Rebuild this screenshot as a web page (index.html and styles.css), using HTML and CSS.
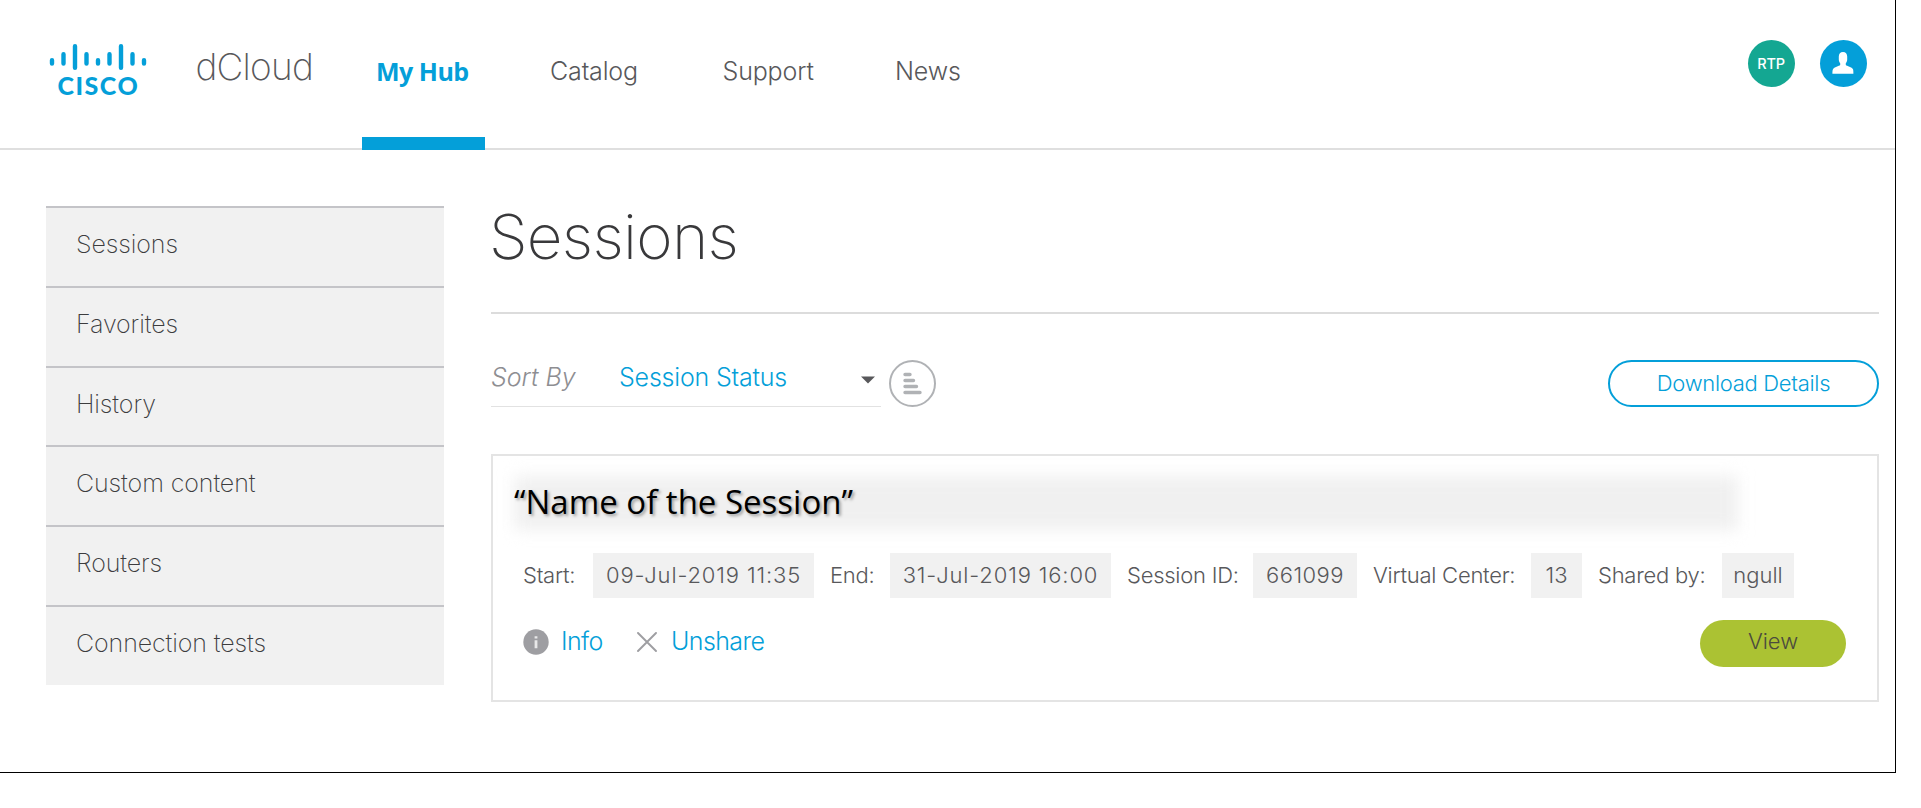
FILE: index.html
```html
<!DOCTYPE html>
<html lang="en">
<head>
<meta charset="utf-8">
<title>dCloud - Sessions</title>
<link rel="stylesheet" href="styles.css">
</head>
<body>
<div class="frame">
  <header class="header">
    <a class="logo">
      <svg class="logo-bars" viewBox="0 0 98 28" width="98" height="28">
        <g stroke="#049fd9" stroke-width="4.4" stroke-linecap="round">
          <path d="M3 17.2v3.4M14.500 11.2v9.4M26 3.2v21.600M37.500 11.2v9.4M49 17.2v3.4M60.500 11.2v9.4M72 3.2v21.600M83.500 11.2v9.4M95 17.2v3.4"/>
        </g>
      </svg>
      <span class="logo-word">CISCO</span>
    </a>
    <span class="brand">dCloud</span>
    <nav class="nav">
      <a class="nav-item active">My Hub</a>
      <a class="nav-item catalog">Catalog</a>
      <a class="nav-item support">Support</a>
      <a class="nav-item news">News</a>
    </nav>
    <div class="account">
      <span class="badge region">RTP</span>
      <span class="badge user">
        <svg viewBox="0 0 22 22" width="22" height="22"><path fill="#fff" d="M11 0c2.700 0 4.200 1.800 4.200 4.500v3c0 1.500-.6 2.900-1.400 3.800v1.600c1 1 6.200 2 7.200 4.300.3.900.4 2.400.4 4.500H.4c0-2.100.1-3.600.6-4.500 1-2.200 6.200-3.300 7.200-4.300v-1.600c-.8-.9-1.400-2.300-1.400-3.800v-3C6.800 1.800 8.300 0 11 0z"/></svg>
      </span>
    </div>
  </header>
  <div class="body">
    <aside class="sidebar">
      <a class="side-item">Sessions</a>
      <a class="side-item">Favorites</a>
      <a class="side-item">History</a>
      <a class="side-item">Custom content</a>
      <a class="side-item">Routers</a>
      <a class="side-item">Connection tests</a>
    </aside>
    <main class="main">
      <h1 class="title">Sessions</h1>
      <div class="toolbar">
        <div class="sort">
          <span class="sort-label">Sort By</span>
          <span class="sort-value">Session Status</span>
          <svg class="caret" viewBox="0 0 14 8" width="14" height="8"><path d="M0 .4h14L7 7.600z" fill="#58585b"/></svg>
        </div>
        <button class="order">
          <svg viewBox="0 0 19 23" width="19" height="23"><path d="M2 2.500h5M2 8.500h8.500M2 14.500h11.500M2 20.500h15" stroke="#b0b2b5" stroke-width="3.400" stroke-linecap="round"/></svg>
        </button>
        <button class="download">Download Details</button>
      </div>
      <section class="card">
        <div class="name"><span>“Name of the Session”</span></div>
        <div class="meta">
          <span class="label w-start">Start:</span><span class="tag w-date">09-Jul-2019 11:35</span>
          <span class="label w-end">End:</span><span class="tag w-date">31-Jul-2019 16:00</span>
          <span class="label w-id">Session ID:</span><span class="tag w-num">661099</span>
          <span class="label w-vc">Virtual Center:</span><span class="tag w-small">13</span>
          <span class="label w-by">Shared by:</span><span class="tag w-user">ngull</span>
        </div>
        <div class="actions">
          <a class="action info"><svg viewBox="0 0 26 26" width="26" height="26"><circle cx="13" cy="13" r="12.700" fill="#9e9ea2"/><path d="M11.600 7.300h2.800v2.200h-2.800zM11.600 11.300h2.800v8h-2.800z" fill="#e8e8e9"/></svg><span>Info</span></a>
          <a class="action unshare"><svg viewBox="0 0 20 20" width="20" height="20"><path d="M1 1l18 18M19 1L1 19" stroke="#9e9ea2" stroke-width="1.900" stroke-linecap="round"/></svg><span>Unshare</span></a>
          <button class="view">View</button>
        </div>
      </section>
    </main>
  </div>
</div>
</body>
</html>
```

FILE: styles.css
```css
* { box-sizing: border-box; }
body { margin: 0; background: #fff; font-family: Inter, "Liberation Sans", sans-serif; font-weight: 300; color: #58585b; overflow: hidden; }
button { font: inherit; padding: 0; background: none; }
svg { display: block; flex: none; }
.frame { width: 1896px; height: 773px; border-right: 1px solid #000; border-bottom: 1px solid #000; }

.header { display: flex; height: 150px; border-bottom: 2px solid #dfdfdf; white-space: nowrap; }
.logo { width: 147px; margin-left: 48.500px; padding-top: 43px; }
.logo-word { display: block; margin: -1px 0 0 9px; font: 900 25px/30px Lato, sans-serif; letter-spacing: 1.5px; color: #049fd9; }
.brand { width: 166px; padding-top: 42px; font-size: 37px; line-height: 50px; font-weight: 200; letter-spacing: -0.8px; color: #58585b; }
.nav { display: flex; height: 150px; font-size: 25px; line-height: 36px; letter-spacing: -0.15px; }
.nav-item { padding-top: 53px; }
.nav-item.active { width: 123px; margin-right: 65.500px; padding-left: 14.500px; border-bottom: 13px solid #049fd9; font-family: "Open Sans", sans-serif; font-weight: 700; letter-spacing: -0.5px; color: #049fd9; }
.catalog, .support { width: 172.500px; }
.account { display: flex; gap: 25px; margin: 39.500px 28.500px 0 auto; }
.badge { display: flex; width: 47px; height: 47px; border-radius: 50%; align-items: center; justify-content: center; }
.region { background: #14a792; color: #fff; font-size: 14.500px; font-weight: 500; letter-spacing: -0.2px; }
.user { background: #049fd9; }

.body { display: flex; gap: 47px; padding: 56px 16px 0 46px; }
.sidebar { display: grid; grid-template-rows: repeat(6, 79.750px); width: 398px; height: 478.500px; background: #f1f1f1; }
.side-item { padding: 18px 0 0 30px; border-top: 2px solid #c4c4c8; font-size: 25px; line-height: 36px; font-weight: 200; letter-spacing: -0.1px; color: #3c3c3e; white-space: nowrap; }
.main { flex: 1; min-width: 0; }
.title { height: 108px; margin: 0; border-bottom: 2px solid #dcdcdc; font-size: 62px; line-height: 62px; font-weight: 200; letter-spacing: -0.7px; text-indent: -2px; color: #39393b; }
.toolbar { display: flex; margin-top: 46px; height: 47px; }
.sort { display: flex; width: 390px; border-bottom: 1.500px solid #e2e2e2; font-size: 25px; line-height: 34px; white-space: nowrap; }
.sort-label { width: 128px; font-style: italic; color: #8e8e92; }
.sort-value { width: 242px; color: #049fd9; font-weight: 350; letter-spacing: -0.2px; }
.caret { margin-top: 16px; }
.order { display: flex; width: 47px; height: 47px; margin-left: 8px; border: 2px solid #b0b2b5; border-radius: 50%; align-items: center; justify-content: center; }
.download { width: 271px; height: 47px; margin-left: auto; padding-bottom: 1px; border: 2px solid #049fd9; border-radius: 24px; font-size: 22px; letter-spacing: -0.3px; color: #049fd9; }

.card { height: 248px; margin-top: 47px; border: 2px solid #e4e4e4; }
.name { position: relative; height: 97px; padding: 24px 0 0 21px; font: 500 33px/44px "Open Sans", sans-serif; font-stretch: 88%; color: #000; text-shadow: 2px 2px 3px rgba(0,0,0,.35); }
.name::before { content: ""; position: absolute; left: 21px; top: 20px; width: 1224px; height: 54px; background: #f0f0f0; filter: blur(8px); }
.name span { position: relative; }
.meta { display: flex; height: 45px; padding-left: 30px; font-size: 22px; line-height: 44px; letter-spacing: -0.25px; white-space: nowrap; }
.tag { background: #f1f1f1; text-align: center; margin-right: 16px; letter-spacing: 0; }
.w-start { width: 70px; } .w-date { width: 221px; letter-spacing: 0.85px; } .w-end { width: 60px; }
.w-id { width: 126px; } .w-num { width: 104px; letter-spacing: 0.5px; }
.w-vc { width: 158px; } .w-small { width: 51px; }
.w-by { width: 124px; } .w-user { width: 72px; margin-right: 0; }
.actions { display: flex; padding: 22px 31px 0 30px; color: #049fd9; font-size: 25px; line-height: 42px; letter-spacing: -0.6px; font-weight: 350; }
.action { display: flex; }
.action svg { margin-top: 9px; }
.info { width: 114px; gap: 12px; }
.unshare { gap: 14px; }
.unshare svg { margin-top: 12px; }
.view { width: 146px; height: 47px; margin-left: auto; padding-bottom: 5px; border: 0; border-radius: 24px; background: #abc233; font-size: 22px; font-weight: 300; letter-spacing: 0; color: #4b4b3e; }
```
